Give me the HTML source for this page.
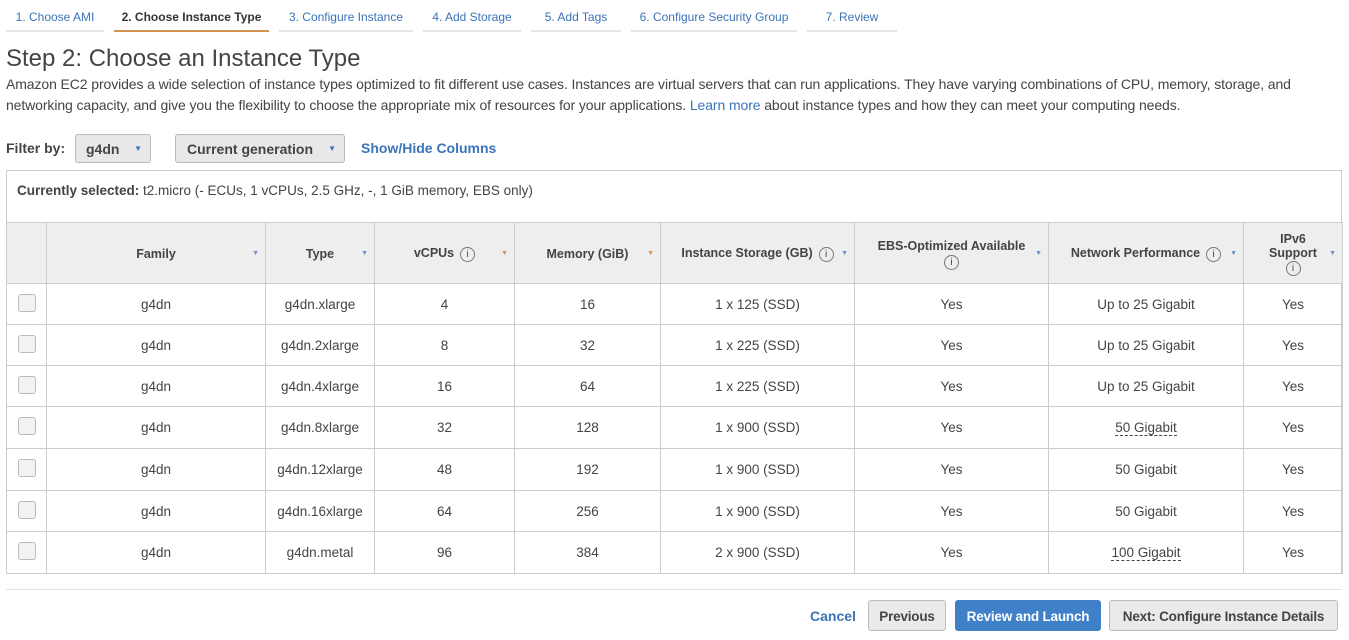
<!DOCTYPE html><html><head><style>
body{margin:0;width:1349px;height:640px;background:#fff;font-family:"Liberation Sans",sans-serif;color:#444;position:relative;overflow:hidden}
.a{position:absolute}
.tab{position:absolute;top:0;height:32px;font-size:12px;color:#3b73b9;text-align:center;line-height:34px;border-bottom:2px solid #e4e4e4;box-sizing:border-box}
.tab.on{color:#333;font-weight:bold;border-bottom:2px solid #d39254}
table{position:absolute;left:6px;top:222px;border-collapse:collapse;font-size:13.5px;color:#444}
td,th{border:1px solid #ccc;text-align:center;padding:0}
th{background:#eee;height:58px;font-size:12.5px;color:#444;position:relative;padding-top:2px}
td{height:40px}
.cb{display:inline-block;width:16px;height:16px;border:1px solid #bbb;border-radius:3px;background:#f2f2f2}
.ar{position:absolute;right:6px;top:27px;font-size:7px;color:#6b8fc6}
.i{display:inline-block;width:13px;height:13px;border:1px solid #777;border-radius:50%;font-size:10px;line-height:13px;font-weight:normal;margin-left:6px;vertical-align:middle}
.btn{position:absolute;top:600px;height:31px;border:1px solid #bbb;border-radius:3px;background:#eaeaea;font-size:13.5px;font-weight:bold;color:#444;line-height:31px;text-align:center;box-sizing:border-box;letter-spacing:-0.2px}
.dl{border-bottom:1px dashed #444}
</style></head><body>
<div class="tab" style="left:6px;width:98px">1. Choose AMI</div>
<div class="tab on" style="left:114px;width:155px">2. Choose Instance Type</div>
<div class="tab" style="left:279px;width:134px">3. Configure Instance</div>
<div class="tab" style="left:423px;width:98px">4. Add Storage</div>
<div class="tab" style="left:531px;width:90px">5. Add Tags</div>
<div class="tab" style="left:631px;width:166px">6. Configure Security Group</div>
<div class="tab" style="left:807px;width:90px">7. Review</div>
<div class="a" style="left:6px;top:45px;font-size:24px;color:#444">Step 2: Choose an Instance Type</div>
<div class="a" style="left:6px;top:74px;width:1330px;font-size:14px;line-height:21px;color:#444;letter-spacing:-0.1px">Amazon EC2 provides a wide selection of instance types optimized to fit different use cases. Instances are virtual servers that can run applications. They have varying combinations of CPU, memory, storage, and networking capacity, and give you the flexibility to choose the appropriate mix of resources for your applications. <span style="color:#3b73b9">Learn more</span> about instance types and how they can meet your computing needs.</div>
<div class="a" style="left:6px;top:140px;font-size:14px;font-weight:bold">Filter by:</div>
<div class="a" style="left:75px;top:134px;width:76px;height:29px;border:1px solid #bbb;border-radius:3px;background:#e8e8e8;box-sizing:border-box;font-size:14px;font-weight:bold;line-height:28px;padding-left:10px">g4dn<span style="position:absolute;right:8px;font-size:8px;color:#3b73b9">&#9660;</span></div>
<div class="a" style="left:175px;top:134px;width:170px;height:29px;border:1px solid #bbb;border-radius:3px;background:#e8e8e8;box-sizing:border-box;font-size:14px;font-weight:bold;line-height:28px;padding-left:11px">Current generation<span style="position:absolute;right:8px;font-size:8px;color:#3b73b9">&#9660;</span></div>
<div class="a" style="left:361px;top:140px;font-size:14px;font-weight:bold;color:#3b73b9">Show/Hide Columns</div>
<div class="a" style="left:6px;top:170px;width:1336px;height:404px;border:1px solid #ccc;box-sizing:border-box"></div>
<div class="a" style="left:17px;top:183px;font-size:13.5px"><b>Currently selected:</b> t2.micro (- ECUs, 1 vCPUs, 2.5 GHz, -, 1 GiB memory, EBS only)</div>
<table>
<tr><th style="width:39px"></th><th style="width:218px">Family<span class="ar">&#9660;</span></th><th style="width:108px">Type<span class="ar">&#9660;</span></th><th style="width:139px">vCPUs<span class="i">i</span><span class="ar" style="color:#d39254">&#9660;</span></th><th style="width:145px">Memory (GiB)<span class="ar" style="color:#d39254">&#9660;</span></th><th style="width:193px">Instance Storage (GB)<span class="i">i</span><span class="ar">&#9660;</span></th><th style="width:193px">EBS-Optimized Available<br><span class="i" style="margin:2px 0 0">i</span><span class="ar">&#9660;</span></th><th style="width:194px">Network Performance<span class="i">i</span><span class="ar">&#9660;</span></th><th style="width:98px">IPv6<br>Support<br><span class="i" style="margin:0">i</span><span class="ar">&#9660;</span></th></tr>
<tr><td><span class="cb"></span></td><td>g4dn</td><td>g4dn.xlarge</td><td>4</td><td>16</td><td>1 x 125 (SSD)</td><td>Yes</td><td>Up to 25 Gigabit</td><td>Yes</td></tr>
<tr><td><span class="cb"></span></td><td>g4dn</td><td>g4dn.2xlarge</td><td>8</td><td>32</td><td>1 x 225 (SSD)</td><td>Yes</td><td>Up to 25 Gigabit</td><td>Yes</td></tr>
<tr><td><span class="cb"></span></td><td>g4dn</td><td>g4dn.4xlarge</td><td>16</td><td>64</td><td>1 x 225 (SSD)</td><td>Yes</td><td>Up to 25 Gigabit</td><td>Yes</td></tr>
<tr><td style="height:41px"><span class="cb"></span></td><td>g4dn</td><td>g4dn.8xlarge</td><td>32</td><td>128</td><td>1 x 900 (SSD)</td><td>Yes</td><td><span class="dl">50 Gigabit</span></td><td>Yes</td></tr>
<tr><td style="height:41px"><span class="cb"></span></td><td>g4dn</td><td>g4dn.12xlarge</td><td>48</td><td>192</td><td>1 x 900 (SSD)</td><td>Yes</td><td>50 Gigabit</td><td>Yes</td></tr>
<tr><td><span class="cb"></span></td><td>g4dn</td><td>g4dn.16xlarge</td><td>64</td><td>256</td><td>1 x 900 (SSD)</td><td>Yes</td><td>50 Gigabit</td><td>Yes</td></tr>
<tr><td style="height:41px"><span class="cb"></span></td><td>g4dn</td><td>g4dn.metal</td><td>96</td><td>384</td><td>2 x 900 (SSD)</td><td>Yes</td><td><span class="dl">100 Gigabit</span></td><td>Yes</td></tr>
</table>
<div class="a" style="left:6px;top:589px;width:1336px;height:1px;background:#e4e4e4"></div>
<div class="a" style="left:810px;top:608px;font-size:14px;font-weight:bold;color:#3b73b9">Cancel</div>
<div class="btn" style="left:868px;width:78px">Previous</div>
<div class="btn" style="left:955px;width:146px;background:#3f80c8;border-color:#3f80c8;color:#fff">Review and Launch</div>
<div class="btn" style="left:1109px;width:229px">Next: Configure Instance Details</div>
</body></html>
